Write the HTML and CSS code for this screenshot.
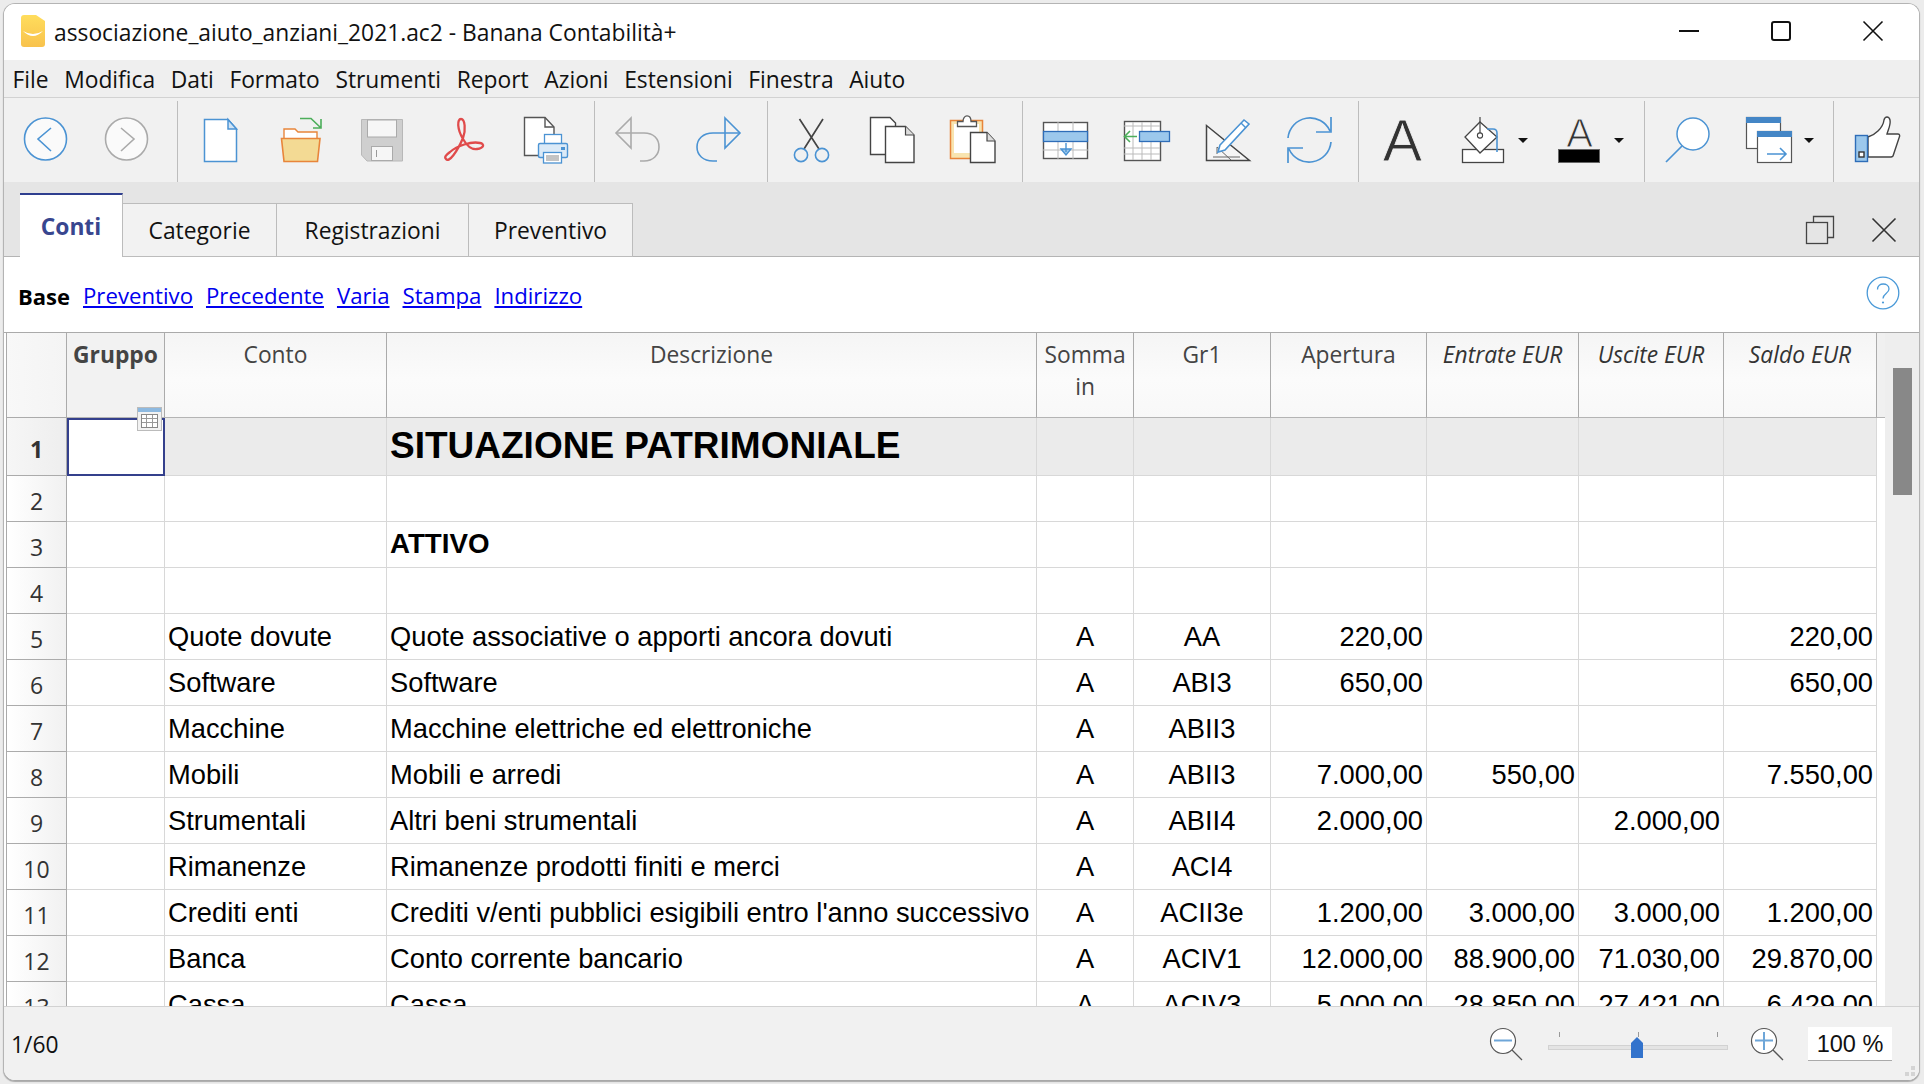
FILE: index.html
```html
<!DOCTYPE html>
<html lang="it">
<head>
    <meta charset="UTF-8">
    <title>Banana Contabilità+</title>
    <link rel="stylesheet" href="styles.css">
</head>
<body>
<div class="window">
    <div class="titlebar">
        <svg class="app-icon" width="26" height="34" viewBox="0 0 26 34">
            <defs><linearGradient id="bana" x1="0" y1="0" x2="0" y2="1"><stop offset="0" stop-color="#ffdd5c"/><stop offset="1" stop-color="#f8c24c"/></linearGradient></defs>
            <path d="M4 1H16L25 7V30Q25 33 22 33H4Q1 33 1 30V4Q1 1 4 1Z" fill="url(#bana)"/>
            <path d="M3 17Q13 23 23 17Q13 27 3 17Z" fill="#fff"/>
        </svg>
        <span class="title-text">associazione_aiuto_anziani_2021.ac2 - Banana Contabilità+</span>
        <div class="win-controls">
            <svg width="22" height="22" viewBox="0 0 22 22"><path d="M1 11H21" stroke="#111" stroke-width="2"/></svg>
            <svg width="22" height="22" viewBox="0 0 22 22"><rect x="2" y="2" width="18" height="18" rx="2" fill="none" stroke="#111" stroke-width="2"/></svg>
            <svg width="22" height="22" viewBox="0 0 22 22"><path d="M1.5 1.5L20.5 20.5M20.5 1.5L1.5 20.5" stroke="#111" stroke-width="1.6"/></svg>
        </div>
    </div>

    <div class="menubar">
        <span>File</span><span>Modifica</span><span>Dati</span><span>Formato</span><span>Strumenti</span><span>Report</span><span>Azioni</span><span>Estensioni</span><span>Finestra</span><span>Aiuto</span>
    </div>

    <div class="toolbar">
        <div class="btn"><svg width="61" height="60"><circle cx="30.5" cy="29" r="21" fill="#fafafa" stroke="#4b93d3" stroke-width="1.6"/><path d="M36 18L23 29L36 41" fill="none" stroke="#4b93d3" stroke-width="1.6"/></svg></div>
        <div class="btn"><svg width="61" height="60"><circle cx="30.5" cy="29" r="21" fill="#fafafa" stroke="#aaa" stroke-width="1.6"/><path d="M25 18L38 29L25 41" fill="none" stroke="#aaa" stroke-width="1.6"/></svg></div>
        <div class="sep s1"></div>
        <div class="btn"><svg width="61" height="60"><path d="M14.5 9.5H38L46.5 19V51.5H14.5Z" fill="#fff" stroke="#4b93d3" stroke-width="1.5"/><path d="M38 9.5V19H46.5Z" fill="#cfe3f5" stroke="#4b93d3" stroke-width="1.5"/></svg></div>
        <div class="btn"><svg width="61" height="60"><path d="M13 30V19H24L27 22H46V30Z" fill="#fff" stroke="#e8853a" stroke-width="1.4"/><path d="M10.5 28.5H49L46.5 51.5H13Z" fill="#f3da94" stroke="#e8853a" stroke-width="1.6"/><path d="M29 8.5H40L50 18M50 9V18H42" fill="none" stroke="#4cae5a" stroke-width="1.6"/></svg></div>
        <div class="btn"><svg width="61" height="60"><path d="M9.5 9.5H50.5V51H15L9.5 45Z" fill="#cfcfcf" stroke="#b8b8b8"/><rect x="15.5" y="10" width="29" height="17" fill="#f6f6f6" stroke="#aaa"/><rect x="19.5" y="36.5" width="21" height="14" fill="#f6f6f6" stroke="#aaa"/><path d="M24.5 40V47" stroke="#999"/></svg></div>
        <div class="btn"><svg width="61" height="60"><path d="M13 49C16 53 24 42 30 28C33 20 32 9 28 9C24 9 24 19 30 29C34 36 38 40 44 39C51 38 52 34 47 33C38 31 24 36 17 42C13 45 11 47 13 49Z" fill="none" stroke="#e04b4b" stroke-width="2.3"/></svg></div>
        <div class="btn"><svg width="61" height="60"><path d="M10.5 7.5H31L40 17V45.5H10.5Z" fill="#fff" stroke="#555" stroke-width="1.4"/><path d="M31 7.5V17H40" fill="none" stroke="#555" stroke-width="1.4"/><rect x="30.5" y="24.5" width="17" height="10" fill="#fff" stroke="#4b93d3" stroke-width="1.3"/><rect x="24.5" y="33.5" width="29" height="14" rx="1.5" fill="#dbeaf7" stroke="#4b93d3" stroke-width="1.4"/><rect x="47" y="37" width="4" height="3" fill="#4b93d3"/><rect x="29.5" y="42.5" width="18" height="10.5" fill="#fff" stroke="#4b93d3" stroke-width="1.3"/><path d="M32 46H45M32 48H45M32 50H45" stroke="#888"/></svg></div>
        <div class="sep s2"></div>
        <div class="btn"><svg width="61" height="60"><path d="M23 8L8 23L23 38Z" fill="#f1f1f1" stroke="#aaa" stroke-width="1.6"/><path d="M8 23H36C46 23 51 29 51 37C51 45 45 51 36 51H32" fill="none" stroke="#aaa" stroke-width="1.6"/></svg></div>
        <div class="btn"><svg width="61" height="60"><path d="M36 8L51 23L36 38Z" fill="#f1f1f1" stroke="#4b93d3" stroke-width="1.6"/><path d="M51 23H24C14 23 8 29 8 37C8 45 14 51 24 51H28" fill="none" stroke="#4b93d3" stroke-width="1.6"/></svg></div>
        <div class="sep s3"></div>
        <div class="btn"><svg width="61" height="60"><path d="M18.5 9L38 39M42 9L23 39" fill="none" stroke="#444" stroke-width="1.7"/><circle cx="20" cy="45" r="6.6" fill="none" stroke="#4b93d3" stroke-width="1.6"/><circle cx="41" cy="45" r="6.6" fill="none" stroke="#4b93d3" stroke-width="1.6"/></svg></div>
        <div class="btn"><svg width="61" height="60"><path d="M8.5 7.5H28L33.5 13V44.5H8.5Z" fill="#fff" stroke="#444" stroke-width="1.4"/><path d="M23.5 16.5H43.5L52 25V52.5H23.5Z" fill="#fff" stroke="#444" stroke-width="1.4"/><path d="M43.5 16.5V25H52" fill="#ddd" stroke="#444" stroke-width="1.2"/></svg></div>
        <div class="btn"><svg width="61" height="60"><rect x="7.5" y="10.5" width="32" height="38" fill="#f8e4b0" stroke="#e8853a" stroke-width="1.5"/><rect x="11" y="14" width="25" height="29" fill="#fff"/><path d="M14.5 16.5V11.5H20C20 4 28 4 28 11.5H33.5V16.5Z" fill="#fff" stroke="#555" stroke-width="1.3"/><path d="M27.5 22.5H44L52 31V52.5H27.5Z" fill="#fff" stroke="#444" stroke-width="1.4"/><path d="M44 22.5V31H52" fill="#ddd" stroke="#444" stroke-width="1.2"/></svg></div>
        <div class="sep s4"></div>
        <div class="btn"><svg width="61" height="60"><rect x="7.5" y="12.5" width="44" height="36" fill="#fff" stroke="#555" stroke-width="1.4"/><path d="M22 12V49M37 12V49M7 40H52" stroke="#bbb"/><rect x="7.5" y="21.5" width="44" height="10" fill="#9cc8ec" stroke="#2e6db8" stroke-width="1.3"/><path d="M30 33V42M25 39L30 45L35 39Z" fill="#9cc8ec" stroke="#4b93d3" stroke-width="1.4"/></svg></div>
        <div class="btn"><svg width="61" height="60"><rect x="7.5" y="11.5" width="36" height="39" fill="#fff" stroke="#555" stroke-width="1.4"/><path d="M16 12V50M25 12V50M34 12V50M7 38H43M7 44H43M7 16H43" stroke="#bbb"/><rect x="22.5" y="21.5" width="30" height="10" fill="#9cc8ec" stroke="#2e6db8" stroke-width="1.3"/><path d="M20 26.5H8M13 21L7.5 26.5L13 32" fill="none" stroke="#4cae5a" stroke-width="1.6"/></svg></div>
        <div class="btn"><svg width="61" height="60"><path d="M8.5 15.5L51.5 50.5H8.5Z" fill="#f6f6f6" stroke="#444" stroke-width="1.5"/><path d="M19 37L33 50M19 37V44M15 47H42" fill="none" stroke="#666"/><path d="M22 35L46 10L51 14L27 40L20 42Z" fill="#fff" stroke="#4b93d3" stroke-width="1.6"/><path d="M43 13L48 18" stroke="#4b93d3" stroke-width="1.4"/></svg></div>
        <div class="btn"><svg width="61" height="60"><g fill="none" stroke="#4b93d3" stroke-width="1.7"><path d="M9 28A22 22 0 0 1 51 21M52 7V22H37"/><path d="M52 32A22 22 0 0 1 10 39M9 53V38H24"/></g></svg></div>
        <div class="sep s4"></div>
        <div class="btn"><svg class="glyph" width="61" height="60"><text x="30.5" y="51" text-anchor="middle" class="big-a">A</text></svg></div>
        <div class="btn has-menu"><svg width="61" height="60"><rect x="9.5" y="39.5" width="41" height="13" fill="#fff" stroke="#444" stroke-width="1.3"/><path d="M27 12L44 27L27 43L12 27Z" fill="#fff" stroke="#444" stroke-width="1.3"/><path d="M27 7V26" stroke="#444" stroke-width="1.2"/><circle cx="27" cy="25.5" r="2.6" fill="#fff" stroke="#444" stroke-width="1.1"/><path d="M34 19H40Q44 19 44 23V42" fill="none" stroke="#4b93d3" stroke-width="1.6"/></svg><span class="caret"></span></div>
        <div class="btn has-menu"><svg width="61" height="60"><text x="30.5" y="37" text-anchor="middle" class="thin-a">A</text><rect x="9.5" y="39.5" width="41" height="13" fill="#000" stroke="#666"/></svg><span class="caret"></span></div>
        <div class="sep s5"></div>
        <div class="btn"><svg width="61" height="60"><circle cx="35" cy="24" r="16" fill="#fff" stroke="#4b93d3" stroke-width="1.5"/><path d="M24 36L8 52" stroke="#4b93d3" stroke-width="1.7"/></svg></div>
        <div class="btn has-menu"><svg width="61" height="60"><rect x="7.5" y="7.5" width="34" height="31" fill="#fff" stroke="#555" stroke-width="1.2"/><rect x="7" y="7" width="35" height="6" fill="#4486c6"/><rect x="18.5" y="21.5" width="34" height="31" fill="#fff" stroke="#555" stroke-width="1.2"/><rect x="18" y="21" width="35" height="6" fill="#4486c6"/><path d="M28 44H47M41 38L47 44L41 50" fill="none" stroke="#4b93d3" stroke-width="1.6"/></svg><span class="caret"></span></div>
        <div class="sep s4"></div>
        <div class="btn"><svg width="61" height="60"><path d="M21 27C28 25 36 18 37 10C38 6 42 6 43 10C44 15 41 20 40 24H51C53 24 53 26 52 28L46 46Q45 47 44 47H21Z" fill="#fff" stroke="#444" stroke-width="1.4"/><rect x="8.5" y="25.5" width="12" height="26" fill="#9cc8ec" stroke="#2e6db8" stroke-width="1.4"/><rect x="12" y="42" width="5" height="5" fill="#fff" stroke="#333" stroke-width="1.4"/></svg></div>
    </div>

    <div class="tabbar">
        <div class="tab active">Conti</div>
        <div class="tab tab-cat">Categorie</div>
        <div class="tab tab-reg">Registrazioni</div>
        <div class="tab tab-pre">Preventivo</div>
        <div class="tab-tools">
            <svg width="30" height="30" viewBox="0 0 30 30"><path d="M8.5 7.5V1.5H28.5V22.5H22" fill="none" stroke="#444" stroke-width="1.3"/><rect x="1.5" y="7.5" width="21" height="21" fill="none" stroke="#444" stroke-width="1.3"/></svg>
            <svg width="26" height="26" viewBox="0 0 26 26"><path d="M1.5 1.5L24.5 24.5M24.5 1.5L1.5 24.5" stroke="#333" stroke-width="1.6"/></svg>
        </div>
    </div>

    <div class="viewbar">
        <b>Base</b><a href="#">Preventivo</a><a href="#">Precedente</a><a href="#">Varia</a><a href="#">Stampa</a><a href="#">Indirizzo</a>
        <svg class="help" width="34" height="34" viewBox="0 0 34 34"><circle cx="17" cy="17" r="15.8" fill="none" stroke="#4b9ad8" stroke-width="1.3"/><path d="M11.5 13.5C11.5 6 23 6.5 23 13C23 17.5 17 17.5 17 22.5" fill="none" stroke="#4b9ad8" stroke-width="1.3"/><circle cx="17" cy="26.5" r="1.1" fill="#4b9ad8"/></svg>
    </div>

    <div class="sheet-area">
        <div class="sheet">
            <table>
                <colgroup><col class="c0"><col class="c1"><col class="c2"><col class="c3"><col class="c4"><col class="c5"><col class="c6"><col class="c7"><col class="c8"><col class="c9"><col class="c10"></colgroup>
                <thead>
                    <tr>
                        <th class="rh"></th><th class="cur"><b>Gruppo</b></th><th>Conto</th><th>Descrizione</th><th>Somma in</th><th>Gr1</th><th>Apertura</th><th class="it">Entrate EUR</th><th class="it">Uscite EUR</th><th class="it">Saldo EUR</th><th class="fill"></th>
                    </tr>
                </thead>
                <tbody>
                    <tr class="r-title"><td class="rh"><b>1</b></td><td class="sel"><svg class="cal" width="25" height="24" viewBox="0 0 25 24"><rect x=".5" y=".5" width="24" height="23" fill="#f2f2f2" stroke="#bbb"/><rect x="1" y="1" width="23" height="4" fill="#8db9e0"/><rect x="4.5" y="7.5" width="16" height="13" fill="#fff" stroke="#888"/><path d="M9.5 8V20M15.5 8V20M5 11.5H20M5 15.5H20" stroke="#999"/></svg></td><td></td><td class="heading">SITUAZIONE PATRIMONIALE</td><td></td><td></td><td></td><td></td><td></td><td></td><td class="fill"></td></tr>
                    <tr><td class="rh">2</td><td></td><td></td><td></td><td></td><td></td><td></td><td></td><td></td><td></td><td class="fill"></td></tr>
                    <tr><td class="rh">3</td><td></td><td></td><td class="sub">ATTIVO</td><td></td><td></td><td></td><td></td><td></td><td></td><td class="fill"></td></tr>
                    <tr><td class="rh">4</td><td></td><td></td><td></td><td></td><td></td><td></td><td></td><td></td><td></td><td class="fill"></td></tr>
                    <tr><td class="rh">5</td><td></td><td>Quote dovute</td><td>Quote associative o apporti ancora dovuti</td><td class="ctr">A</td><td class="ctr">AA</td><td class="num">220,00</td><td></td><td></td><td class="num">220,00</td><td class="fill"></td></tr>
                    <tr><td class="rh">6</td><td></td><td>Software</td><td>Software</td><td class="ctr">A</td><td class="ctr">ABI3</td><td class="num">650,00</td><td></td><td></td><td class="num">650,00</td><td class="fill"></td></tr>
                    <tr><td class="rh">7</td><td></td><td>Macchine</td><td>Macchine elettriche ed elettroniche</td><td class="ctr">A</td><td class="ctr">ABII3</td><td></td><td></td><td></td><td></td><td class="fill"></td></tr>
                    <tr><td class="rh">8</td><td></td><td>Mobili</td><td>Mobili e arredi</td><td class="ctr">A</td><td class="ctr">ABII3</td><td class="num">7.000,00</td><td class="num">550,00</td><td></td><td class="num">7.550,00</td><td class="fill"></td></tr>
                    <tr><td class="rh">9</td><td></td><td>Strumentali</td><td>Altri beni strumentali</td><td class="ctr">A</td><td class="ctr">ABII4</td><td class="num">2.000,00</td><td></td><td class="num">2.000,00</td><td></td><td class="fill"></td></tr>
                    <tr><td class="rh">10</td><td></td><td>Rimanenze</td><td>Rimanenze prodotti finiti e merci</td><td class="ctr">A</td><td class="ctr">ACI4</td><td></td><td></td><td></td><td></td><td class="fill"></td></tr>
                    <tr><td class="rh">11</td><td></td><td>Crediti enti</td><td>Crediti v/enti pubblici esigibili entro l'anno successivo</td><td class="ctr">A</td><td class="ctr">ACII3e</td><td class="num">1.200,00</td><td class="num">3.000,00</td><td class="num">3.000,00</td><td class="num">1.200,00</td><td class="fill"></td></tr>
                    <tr><td class="rh">12</td><td></td><td>Banca</td><td>Conto corrente bancario</td><td class="ctr">A</td><td class="ctr">ACIV1</td><td class="num">12.000,00</td><td class="num">88.900,00</td><td class="num">71.030,00</td><td class="num">29.870,00</td><td class="fill"></td></tr>
                    <tr><td class="rh">13</td><td></td><td>Cassa</td><td>Cassa</td><td class="ctr">A</td><td class="ctr">ACIV3</td><td class="num">5.000,00</td><td class="num">28.850,00</td><td class="num">27.421,00</td><td class="num">6.429,00</td><td class="fill"></td></tr>
                </tbody>
            </table>
        </div>
        <div class="scrollbar"><div class="thumb"></div></div>
    </div>

    <div class="statusbar">
        <span class="count">1/60</span>
        <svg class="zoom-out" width="34" height="34" viewBox="0 0 34 34"><circle cx="14" cy="14" r="12.5" fill="#fff" stroke="#555" stroke-width="1.2"/><path d="M23 23L33 33" stroke="#555" stroke-width="1.3"/><path d="M5 13.5H23" stroke="#6ea6d8" stroke-width="2"/></svg>
        <svg class="slider" width="180" height="30" viewBox="0 0 180 30"><path d="M11.5 3V8M90.5 3V8M169.5 3V8" stroke="#999"/><rect x=".5" y="16.5" width="179" height="4" fill="#e4e4e4" stroke="#d2d2d2"/><path d="M83 29V14L89 8L95 14V29Z" fill="#3373cc"/></svg>
        <svg class="zoom-in" width="34" height="34" viewBox="0 0 34 34"><circle cx="14" cy="14" r="12.5" fill="#fff" stroke="#555" stroke-width="1.2"/><path d="M23 23L33 33" stroke="#555" stroke-width="1.3"/><path d="M5 13.5H23M14 5V23" stroke="#6ea6d8" stroke-width="2"/></svg>
        <span class="zoom-box">100 %</span>
        <svg class="grip" width="10" height="10" viewBox="0 0 10 10"><path d="M6 0H10V4H6ZM0 6H4V10H0ZM6 6H10V10H6Z" fill="#d4d4d4"/></svg>
    </div>
</div>
</body>
</html>
```

FILE: styles.css
```css
* {
    box-sizing: border-box;
}
html, body {
    margin: 0;
    height: 100%;
    overflow: hidden;
}
body {
    background-color: #ececec;
    padding: 3px 4px 3px 3px;
    font-family: "Open Sans", sans-serif;
    color: #111;
}
.window {
    position: relative;
    width: 1917px;
    height: 1078px;
    display: flex;
    flex-direction: column;
    background-color: #fff;
    border: 1px solid #b4b4b4;
    border-bottom-color: #a8a8a8;
    border-radius: 12px;
    box-shadow: 0 1px 1px #aaa;
    overflow: hidden;
}

/* title bar */
.titlebar {
    height: 56px;
    display: flex;
    align-items: center;
    background-color: #fff;
    padding-left: 16px;
    flex: none;
}
.app-icon {
    flex: none;
    margin-top: -3px;
}
.title-text {
    margin-left: 8px;
    font-size: 22.8px;
    margin-top: 1px;
}
.win-controls {
    margin-left: auto;
    display: flex;
    align-items: center;
    margin-top: -2px;
    padding-right: 35px;
    gap: 70px;
}

/* menu */
.menubar {
    height: 38px;
    flex: none;
    display: flex;
    align-items: center;
    gap: 15.6px;
    padding: 2px 0 0 8.5px;
    background-color: #efefef;
    border-bottom: 1px solid #d2d2d2;
    font-size: 22.8px;
}

/* toolbar */
.toolbar {
    height: 84px;
    flex: none;
    display: flex;
    align-items: center;
    padding-left: 1px;
    background-color: #f1f1f1;
}
.btn {
    width: 81px;
    height: 60px;
    flex: none;
    display: flex;
    align-items: center;
    padding-left: 10px;
}
.btn svg {
    flex: none;
}
.btn .glyph {
    overflow: visible;
}
.has-menu {
    width: 96px;
}
.caret {
    margin-left: 4px;
    border-left: 5px solid transparent;
    border-right: 5px solid transparent;
    border-top: 5px solid #111;
}
.sep {
    width: 1px;
    height: 81px;
    flex: none;
    background-color: #bdbdbd;
    margin-right: 3px;
    margin-top: 2px;
}
.s1 { margin-left: 10px; margin-right: 2px; }
.s2 { margin-left: 9px; }
.s3 { margin-left: 7px; }
.s4 { margin-left: 8px; }
.s5 { margin-left: 9px; }
.big-a {
    font-family: "Liberation Sans", sans-serif;
    font-size: 59px;
    fill: #333;
    stroke: #f1f1f1;
    stroke-width: 0.8px;
}
.thin-a {
    font-family: "Liberation Sans", sans-serif;
    font-size: 40px;
    fill: #333;
    stroke: #f1f1f1;
    stroke-width: 1.1px;
}

/* tabs */
.tabbar {
    height: 75px;
    flex: none;
    display: flex;
    align-items: flex-end;
    padding-left: 16px;
    background-color: #e5e5e5;
    border-bottom: 1px solid #b4b4b4;
}
.tab {
    height: 54px;
    margin-bottom: -1px;
    display: flex;
    align-items: center;
    justify-content: center;
    background-color: #f2f2f2;
    border: 1px solid #bcbcbc;
    border-left: none;
    font-size: 22.8px;
}
.tab.active {
    height: 64px;
    width: 103px;
    background-color: #fff;
    color: #38468f;
    font-weight: 700;
    border: none;
    border-top: 2px solid #2f3f8f;
    border-right: 1px solid #bcbcbc;
}
.tab-cat { width: 154px; }
.tab-reg { width: 192px; }
.tab-pre { width: 164px; }
.tab-tools {
    margin-left: auto;
    align-self: center;
    display: flex;
    align-items: center;
    gap: 36px;
    padding-right: 22px;
    margin-top: 21px;
}

/* view links */
.viewbar {
    height: 75px;
    flex: none;
    display: flex;
    align-items: center;
    gap: 13px;
    padding: 2px 19px 0 14px;
    font-size: 22.2px;
    background-color: #fff;
}
.viewbar b {
    color: #000;
    font-size: 22px;
}
.viewbar a {
    color: #0000ee;
}
.help {
    margin-left: auto;
    margin-bottom: 5px;
}

/* sheet */
.sheet-area {
    flex: 1;
    min-height: 0;
    display: flex;
    border-top: 1px solid #aaa;
}
.sheet {
    width: 1879px;
    flex: none;
    margin-left: 2px;
    overflow: hidden;
    border-left: 1px solid #aaa;
}
table {
    table-layout: fixed;
    width: 1878px;
    border-collapse: separate;
    border-spacing: 0;
    font-family: "Liberation Sans", sans-serif;
    font-size: 27.3px;
    color: #000;
}
.c0 { width: 60px; }
.c1 { width: 98px; }
.c2 { width: 222px; }
.c3 { width: 650px; }
.c4 { width: 97px; }
.c5 { width: 137px; }
.c6 { width: 156px; }
.c7 { width: 152px; }
.c8 { width: 145px; }
.c9 { width: 153px; }
.c10 { width: 8px; }
th {
    height: 85px;
    vertical-align: top;
    padding: 6px 2px 0;
    font-family: "Open Sans", sans-serif;
    font-size: 22.8px;
    line-height: 32px;
    font-weight: 400;
    color: #444;
    background: linear-gradient(#f5f5f5, #fbfbfb 55%, #f8f8f8);
    border-right: 1px solid #ababab;
    border-bottom: 1px solid #b4b4b4;
}
th.cur {
    background: #f2f2f2;
    white-space: nowrap;
}
th.it {
    font-style: italic;
    color: #333;
}
td {
    height: 46px;
    padding: 0 3px;
    white-space: nowrap;
    overflow: hidden;
    border-right: 1px solid #d8d8d8;
    border-bottom: 1px solid #d8d8d8;
}
.rh {
    padding: 4px 0 0;
    text-align: center;
    font-family: "Open Sans", sans-serif;
    font-size: 23px;
    color: #333;
    background: linear-gradient(90deg, #fff, #f1f1f1);
    border-right: 1px solid #ababab;
    border-bottom: 1px solid #ababab;
}
th.rh {
    padding: 0;
    background: linear-gradient(90deg, #f8f8f8, #f4f4f4);
}
.r-title td {
    height: 58px;
    background-color: #ebebeb;
}
.r-title td.rh {
    background: linear-gradient(90deg, #f6f6f6, #eeeeee);
}
td.sel {
    position: relative;
    overflow: visible;
    background-color: #fff;
    border: 2px solid #34408c;
}
.cal {
    position: absolute;
    top: -13px;
    right: 1px;
}
.heading {
    font-size: 37px;
    font-weight: 700;
    padding-bottom: 2px;
}
.sub {
    font-size: 27.7px;
    font-weight: 700;
    padding-bottom: 2px;
}
.ctr {
    text-align: center;
}
.num {
    text-align: right;
}
td.fill {
    border: none;
    background-color: #fff;
}
.r-title td.fill {
    background-color: #fff;
}
th.fill {
    border-right: none;
    background: #f0f0f0;
}
.scrollbar {
    flex: 1;
    background-color: #eeeeee;
    padding-top: 35px;
}
.thumb {
    width: 19px;
    height: 127px;
    margin-left: 8px;
    background-color: #888;
}

/* status bar */
.statusbar {
    height: 74px;
    flex: none;
    position: relative;
    display: flex;
    align-items: center;
    padding: 0 27px 0 7px;
    background-color: #f1f1f1;
    border-top: 1px solid #d2d2d2;
}
.count {
    font-size: 22.8px;
    margin-top: 2px;
}
.zoom-out {
    margin-left: auto;
}
.slider {
    margin-left: 25px;
}
.zoom-in {
    margin-left: 22px;
}
.zoom-box {
    width: 84px;
    height: 34px;
    margin-left: 24px;
    background-color: #fff;
    border-bottom: 1px solid #aaa;
    font-family: "Liberation Sans", sans-serif;
    font-size: 23.5px;
    line-height: 34px;
    text-align: center;
}
.grip {
    position: absolute;
    right: 4px;
    bottom: 4px;
}
```
